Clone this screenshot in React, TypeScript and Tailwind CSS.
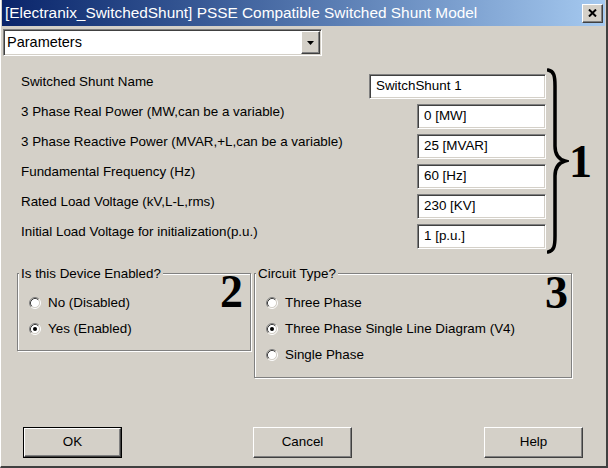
const sunken =
  "border border-t-[#808080] border-l-[#808080] border-r-white border-b-white shadow-[inset_1px_1px_0_#404040,inset_-1px_-1px_0_#d4d0c8]";
const raised =
  "border border-t-white border-l-white border-r-[#404040] border-b-[#404040] shadow-[inset_-1px_-1px_0_#808080]";

function Radio({ checked }: { checked?: boolean }) {
  return (
    <svg width="12" height="12" viewBox="0 0 12 12" className="shrink-0">
      <circle cx="6" cy="6" r="4.5" fill="#fff" />
      <path d="M2.11 9.89 A5.5 5.5 0 0 1 9.89 2.11" fill="none" stroke="#808080" />
      <path d="M9.89 2.11 A5.5 5.5 0 0 1 2.11 9.89" fill="none" stroke="#fff" />
      <path d="M2.82 9.18 A4.5 4.5 0 0 1 9.18 2.82" fill="none" stroke="#404040" />
      <path d="M9.18 2.82 A4.5 4.5 0 0 1 2.82 9.18" fill="none" stroke="#d4d0c8" />
      {checked && <circle cx="6" cy="6" r="2" fill="#000" />}
    </svg>
  );
}

const params = [
  { label: "Switched Shunt Name", value: "SwitchShunt 1", wide: true },
  { label: "3 Phase Real Power (MW,can be a variable)", value: "0 [MW]" },
  { label: "3 Phase Reactive Power (MVAR,+L,can be a variable)", value: "25 [MVAR]" },
  { label: "Fundamental Frequency (Hz)", value: "60 [Hz]" },
  { label: "Rated Load Voltage (kV,L-L,rms)", value: "230 [KV]" },
  { label: "Initial Load Voltage for initialization(p.u.)", value: "1 [p.u.]" },
];

export default function App() {
  return (
    <div className="w-[608px] h-[468px] bg-[#d4d0c8] flex flex-col border-l border-l-white border-r-2 border-r-[#404040] border-b-2 border-b-[#404040] font-['Liberation_Sans',Arial,sans-serif] text-black text-[13.4px] overflow-hidden">
      {/* title bar */}
      <div className="h-[26px] ml-[1px] mr-[1px] flex items-center bg-gradient-to-r from-[#0a246a] to-[#a6caf0] pl-[3px] pr-[2px]">
        <span className="text-white text-[15.4px] whitespace-nowrap">
          [Electranix_SwitchedShunt] PSSE Compatible Switched Shunt Model
        </span>
        <button className={`ml-auto w-[21px] h-[19px] bg-[#d4d0c8] flex items-center justify-center ${raised}`}>
          <svg width="9" height="8" viewBox="0 0 9 8">
            <path d="M1 0.5 L8 7.5 M8 0.5 L1 7.5" stroke="#000" strokeWidth="2" />
          </svg>
        </button>
      </div>

      {/* selector */}
      <div className={`mt-[3px] ml-[2px] w-[319px] h-[27px] bg-white flex items-center ${sunken}`}>
        <span className="pl-[3px] text-[14.5px]">Parameters</span>
        <div className={`ml-auto mr-[1px] w-[19px] h-[23px] bg-[#d4d0c8] flex items-center justify-center ${raised}`}>
          <svg width="7" height="4" viewBox="0 0 7 4">
            <path d="M0 0 H7 L3.5 4 Z" fill="#000" />
          </svg>
        </div>
      </div>

      {/* parameters */}
      <div className="mt-[12px] ml-[20px] flex items-center">
        <div className="w-[525px] flex flex-col">
          {params.map((p) => (
            <div key={p.label} className="h-[30px] flex items-center justify-between">
              <span className="pb-[7px] whitespace-nowrap">{p.label}</span>
              <div className={`${p.wide ? "w-[177px]" : "w-[129px]"} h-[25px] bg-white flex items-center pl-[6px] ${sunken}`}>
                {p.value}
              </div>
            </div>
          ))}
        </div>
        <svg width="22" height="186" viewBox="0 0 22 186" className="ml-[1px]">
          <path
            d="M1 2 C7 3 8 8 8 18 L8 78 C8 86 11 91 18 93 C11 95 8 100 8 108 L8 168 C8 178 7 183 1 184"
            fill="none"
            stroke="#000"
            strokeWidth="3.5"
            strokeLinecap="round"
          />
        </svg>
        <span className="font-['Liberation_Serif',serif] font-bold text-[46px] leading-none mt-[2px]">1</span>
      </div>

      {/* groups */}
      <div className="mt-[12px] ml-[16px] flex gap-[3px] items-start">
        <fieldset className="relative w-[234px] h-[85px] border border-[#808080] shadow-[inset_1px_1px_0_#fff,1px_1px_0_#fff] pl-[11px]">
          <legend className="ml-[-10px] px-[2px] bg-[#d4d0c8] leading-[15px]">Is this Device Enabled?</legend>
          <div className="pt-[9px] flex flex-col">
            <label className="h-[26px] flex items-center gap-[7px]">
              <Radio />
              No (Disabled)
            </label>
            <label className="h-[26px] flex items-center gap-[7px]">
              <Radio checked />
              Yes (Enabled)
            </label>
          </div>
          <span className="absolute right-[7px] top-[-12px] font-['Liberation_Serif',serif] font-bold text-[46px] leading-none">2</span>
        </fieldset>

        <fieldset className="relative w-[318px] h-[112px] border border-[#808080] shadow-[inset_1px_1px_0_#fff,1px_1px_0_#fff] pl-[11px]">
          <legend className="ml-[-10px] px-[2px] bg-[#d4d0c8] leading-[15px]">Circuit Type?</legend>
          <div className="pt-[9px] flex flex-col">
            <label className="h-[26px] flex items-center gap-[7px]">
              <Radio />
              Three Phase
            </label>
            <label className="h-[26px] flex items-center gap-[7px]">
              <Radio checked />
              Three Phase Single Line Diagram (V4)
            </label>
            <label className="h-[26px] flex items-center gap-[7px]">
              <Radio />
              Single Phase
            </label>
          </div>
          <span className="absolute right-[3px] top-[-11px] font-['Liberation_Serif',serif] font-bold text-[46px] leading-none">3</span>
        </fieldset>
      </div>

      {/* buttons */}
      <div className="mt-auto mb-[8px] flex items-center pl-[22px]">
        <button className="w-[99px] h-[31px] border border-black bg-[#d4d0c8] flex">
          <span className={`flex-1 flex items-center justify-center ${raised}`}>OK</span>
        </button>
        <button className={`ml-[131px] w-[99px] h-[31px] bg-[#d4d0c8] flex items-center justify-center ${raised}`}>Cancel</button>
        <button className={`ml-[132px] w-[99px] h-[31px] bg-[#d4d0c8] flex items-center justify-center ${raised}`}>Help</button>
      </div>
    </div>
  );
}
